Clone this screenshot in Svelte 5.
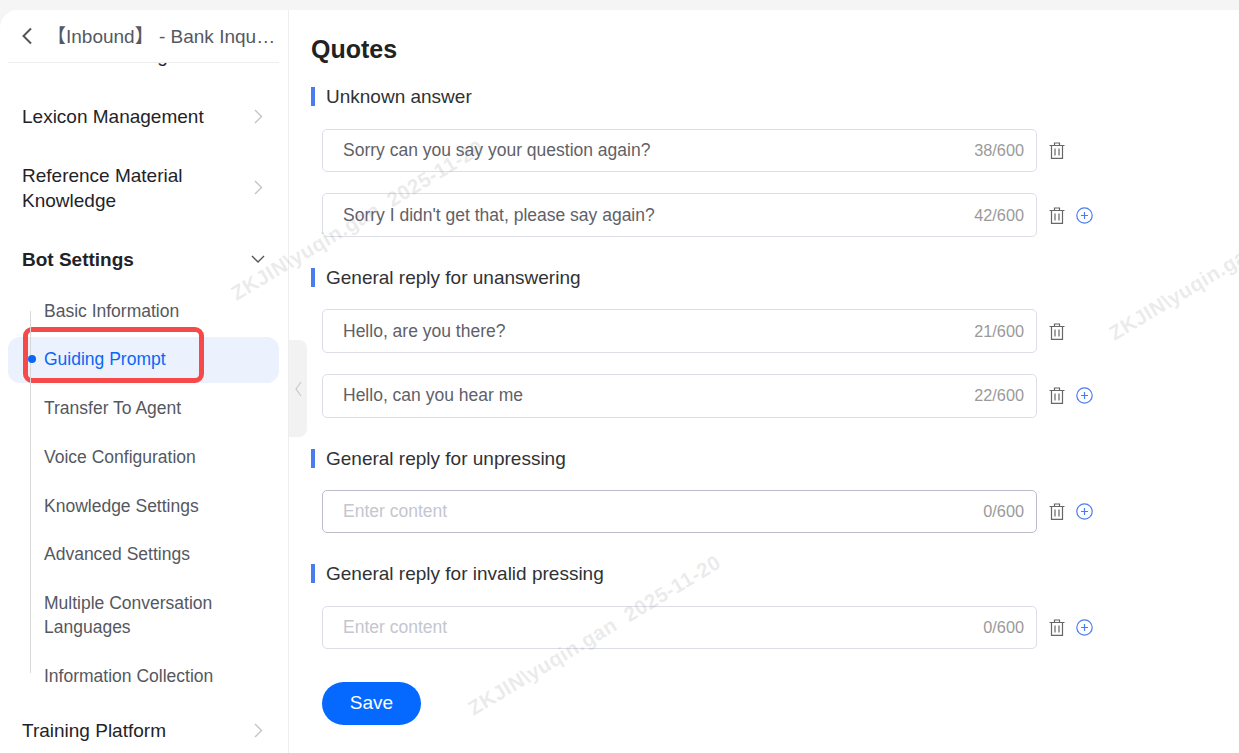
<script>
  const subItems = [
    'Basic Information',
    'Guiding Prompt',
    'Transfer To Agent',
    'Voice Configuration',
    'Knowledge Settings',
    'Advanced Settings',
    'Multiple Conversation Languages',
    'Information Collection'
  ]

  const sections = [
    {
      title: 'Unknown answer',
      rows: [
        { value: 'Sorry can you say your question again?', count: 38 },
        { value: "Sorry I didn't get that, please say again?", count: 42, add: true }
      ]
    },
    {
      title: 'General reply for unanswering',
      rows: [
        { value: 'Hello, are you there?', count: 21 },
        { value: 'Hello, can you hear me', count: 22, add: true }
      ]
    },
    {
      title: 'General reply for unpressing',
      rows: [{ value: '', count: 0, add: true, focus: true }]
    },
    {
      title: 'General reply for invalid pressing',
      rows: [{ value: '', count: 0, add: true }]
    }
  ]

  const marks = [
    { x: 233, y: 283 },
    { x: 470, y: 698 },
    { x: 1111, y: 323 }
  ]
</script>

<div class="page">
  <div class="shell">
    <aside class="sidebar">
      <header class="side-head">
        <svg class="back" width="12" height="18" viewBox="0 0 12 18"><path d="M10 1.500 2.500 9l7.500 7.500" fill="none" stroke="#555" stroke-width="2" /></svg>
        <span class="bot-name">【Inbound】 - Bank Inquiry Assistant</span>
      </header>
      <nav class="nav">
        <div class="clipped-item">
          <span>Answers Training</span>
          {@render chevron()}
        </div>
        <div class="top-item">
          <span>Lexicon Management</span>
          {@render chevron()}
        </div>
        <div class="top-item two-line">
          <span>Reference Material<br />Knowledge</span>
          {@render chevron()}
        </div>
        <div class="top-item open">
          <span>Bot Settings</span>
          <svg width="14" height="14" viewBox="0 0 14 14"><path d="M1 4l6 6 6-6" fill="none" stroke="#555" stroke-width="1.400" /></svg>
        </div>
        <ul class="sub-list">
          {#each subItems as item, i}
            <li class:active={i === 1}>{item}</li>
          {/each}
        </ul>
        <div class="top-item last">
          <span>Training Platform</span>
          {@render chevron()}
        </div>
      </nav>
    </aside>

    <main class="content">
      <h1>Quotes</h1>
      {#each sections as section}
        <section>
          <h2>{section.title}</h2>
          <div class="rows">
            {#each section.rows as row}
              <div class="row">
                <label class="field" class:focus={row.focus}>
                  <input value={row.value} placeholder="Enter content" />
                  <span class="count">{row.count}/600</span>
                </label>
                <svg class="icon" width="16" height="17" viewBox="0 0 16 17" fill="none" stroke="#666" stroke-width="1.200">
                  <path d="M.5 3.500h15M5.500 3.300V1h5v2.300M2.500 3.500v12.900h11V3.500M6 6.500v7M10 6.500v7" />
                </svg>
                {#if row.add}
                  <svg class="icon add" width="17" height="17" viewBox="0 0 17 17" fill="none" stroke="#4a7cf0" stroke-width="1.200">
                    <circle cx="8.500" cy="8.500" r="7.700" />
                    <path d="M8.500 5v7M5 8.500h7" />
                  </svg>
                {/if}
              </div>
            {/each}
          </div>
        </section>
      {/each}
      <button class="save">Save</button>
    </main>
  </div>

  <div class="handle">
    <svg width="8" height="16" viewBox="0 0 8 16"><path d="M7 1 2 8l5 7" fill="none" stroke="#c8c8c8" stroke-width="1.200" /></svg>
  </div>
  <div class="callout"></div>
  {#each marks as mark}
    <span class="watermark" style={`left:${mark.x}px;top:${mark.y}px`}>ZKJIN\yuqin.gan&nbsp;&nbsp;2025-11-20</span>
  {/each}
</div>

{#snippet chevron()}
  <svg class="chev" width="9" height="15" viewBox="0 0 9 15"><path d="M1 1l6.500 6.500L1 14" fill="none" stroke="#c4c4c4" stroke-width="1.400" /></svg>
{/snippet}

<style>
  :global(body) {
    margin: 0;
    background: #f5f5f5;
    overflow: hidden;
  }

  .page {
    position: relative;
    width: 1239px;
    height: 753px;
    overflow: hidden;
    font-family: "Liberation Sans", "Noto Sans CJK SC", Arial, sans-serif;
    color: #1f2329;
  }

  .shell {
    display: flex;
    height: 743px;
    margin-top: 10px;
    background: #fff;
    border-radius: 18px 0 0 0;
    overflow: hidden;
  }

  .sidebar {
    width: 288px;
    flex: none;
    display: flex;
    flex-direction: column;
    border-right: 1px solid #eeeeee;
    overflow: hidden;
  }

  .side-head {
    position: relative;
    z-index: 1;
    height: 52px;
    flex: none;
    margin: 0 9px 0 8px;
    padding-left: 14px;
    display: flex;
    align-items: center;
    border-bottom: 1px solid #eeeeee;
    background: #fff;
  }

  .back {
    flex: none;
    margin-top: -1px;
    margin-left: -1px;
  }

  .bot-name {
    margin-left: 14px;
    margin-top: -3px;
    font-size: 19px;
    color: #55585f;
    white-space: nowrap;
    overflow: hidden;
    text-overflow: ellipsis;
  }

  /* the list is scrolled: its first row sits under the header */
  .nav {
    flex: 1;
    padding: 0 9px 0 8px;
    overflow: hidden;
    margin-top: -23px;
  }

  .clipped-item,
  .top-item {
    display: flex;
    align-items: center;
    justify-content: space-between;
    padding: 0 16px 0 14px;
    font-size: 19px;
    line-height: 25px;
  }

  .clipped-item {
    height: 30px;
    margin-bottom: 23px;
  }

  .top-item {
    height: 46px;
    margin-bottom: 23.500px;
  }

  .top-item.two-line {
    height: 50px;
    margin-bottom: 23.500px;
  }

  .top-item.open {
    height: 46px;
    margin-bottom: 6.300px;
    font-weight: 700;
  }

  .top-item.open svg {
    margin-right: -2px;
  }

  .top-item.last {
    margin: 8.500px 0 0;
  }

  .chev {
    flex: none;
  }

  .sub-list {
    position: relative;
    list-style: none;
    margin: 0;
    padding: 0;
  }

  .sub-list::before {
    content: "";
    position: absolute;
    z-index: 1;
    left: 22px;
    top: 23px;
    bottom: 26px;
    width: 1px;
    background: #d8d8d8;
  }

  .sub-list li {
    position: relative;
    margin-bottom: 2.700px;
    padding: 10.500px 14px 11.500px 36px;
    font-size: 17.500px;
    line-height: 24px;
    color: #55585f;
    border-radius: 12px;
  }

  .sub-list li.active {
    background: #ebf2fe;
    color: #0a66f5;
  }

  .sub-list li.active::before {
    content: "";
    position: absolute;
    z-index: 2;
    left: 20px;
    top: 18px;
    width: 8px;
    height: 8px;
    border-radius: 50%;
    background: #0a66f5;
  }

  .content {
    flex: 1;
    padding: 0 0 0 22px;
    min-width: 0;
  }

  h1 {
    margin: 24px 0 23.200px;
    font-size: 25px;
    line-height: 30px;
    font-weight: 700;
    color: #222;
  }

  section {
    margin-bottom: 31px;
  }

  h2 {
    margin: 0 0 22.400px;
    padding-left: 11px;
    height: 19px;
    border-left: 4px solid #4a7cf0;
    font-size: 19px;
    line-height: 19px;
    font-weight: 400;
    color: #303236;
  }

  .rows {
    display: flex;
    flex-direction: column;
    gap: 21.300px;
    padding-left: 11px;
  }

  .row {
    display: flex;
    align-items: center;
    height: 43.500px;
  }

  .field {
    width: 715px;
    height: 100%;
    box-sizing: border-box;
    display: flex;
    align-items: center;
    padding: 0 12px 0 20px;
    border: 1px solid #dcdde6;
    border-radius: 5px;
    background: #fff;
  }

  .field.focus {
    border-color: #bcbdcc;
  }

  input {
    flex: 1;
    min-width: 0;
    border: 0;
    outline: 0;
    padding: 0;
    font: inherit;
    font-size: 17.500px;
    color: #5f6168;
    background: transparent;
  }

  input::placeholder {
    color: #c4c6d0;
    opacity: 1;
  }

  .count {
    font-size: 16.300px;
    color: #9a9a9a;
  }

  .icon {
    flex: none;
    margin-left: 12px;
  }

  .icon.add {
    margin-left: 11px;
  }

  .save {
    display: block;
    width: 99px;
    height: 43px;
    margin: 32.600px 0 0 11px;
    border: 0;
    border-radius: 22px;
    background: #0569ff;
    color: #fff;
    font: inherit;
    font-size: 19px;
    font-weight: 500;
  }

  .handle {
    position: absolute;
    left: 289px;
    top: 340px;
    width: 18px;
    height: 97px;
    display: flex;
    align-items: center;
    justify-content: center;
    background: #f2f2f2;
    border-radius: 0 8px 8px 0;
  }

  .callout {
    position: absolute;
    left: 23px;
    top: 327px;
    width: 181px;
    height: 56px;
    box-sizing: border-box;
    border: 5.500px solid #f64a4a;
    border-radius: 9px;
  }

  .watermark {
    position: absolute;
    font-size: 20.500px;
    font-weight: 700;
    color: rgba(150, 150, 150, 0.2);
    white-space: nowrap;
    letter-spacing: 0.500px;
    transform: rotate(-31deg);
    transform-origin: left center;
    pointer-events: none;
  }
</style>
